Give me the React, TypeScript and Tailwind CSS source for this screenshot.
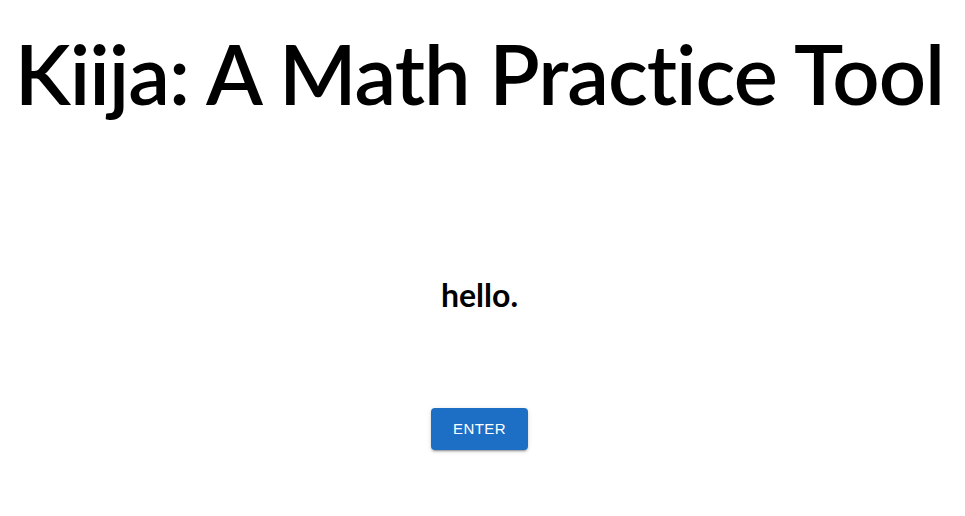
import React from 'react';

const App = () => {
    return (
        <div className="min-h-screen bg-white text-black flex flex-col items-center pr-[6px] font-['Lato',sans-serif]">
            <h1 className="mt-[24px] text-[83px] leading-[1.2] font-semibold tracking-[-1px] whitespace-nowrap">
                Kiija: A Math Practice Tool
            </h1>
            <p className="mt-[149px] text-[32px] leading-[1.4] font-bold">hello.</p>
            <button
                className="mt-[91px] h-[42px] px-[22px] rounded-[4px] bg-[#1d6fc6] text-white text-[15px] uppercase tracking-[0.46px] font-['Liberation_Sans',sans-serif] shadow-[0_3px_1px_-2px_rgba(0,0,0,0.2),0_2px_2px_0_rgba(0,0,0,0.14),0_1px_5px_0_rgba(0,0,0,0.12)]"
            >
                Enter
            </button>
        </div>
    );
};

export default App;
